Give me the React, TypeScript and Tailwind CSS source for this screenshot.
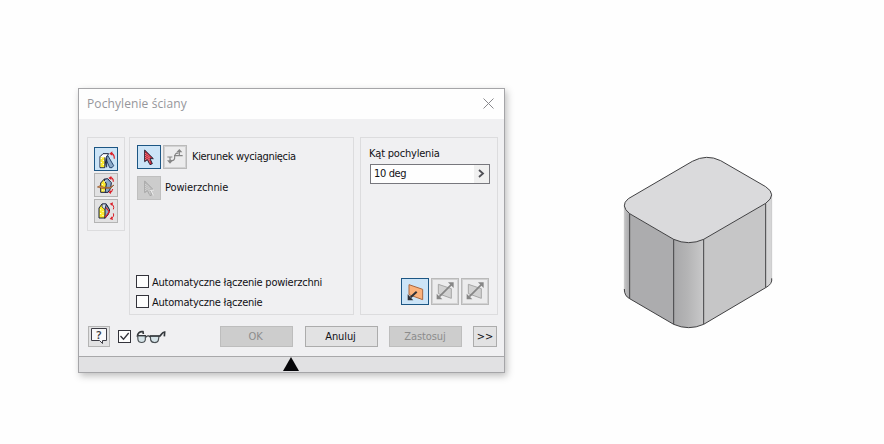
import type { ReactNode } from "react";
import { clsx } from "clsx";

type ToolState = "active" | "idle" | "framed" | "disabled";

const ToolButton = ({ state = "idle", className, children }: { state?: ToolState; className?: string; children: ReactNode }) => (
  <button
    className={clsx(
      "block shrink-0 border",
      state === "active" && "border-[#1c5684] bg-[#cce4f7]",
      state === "idle" && "border-[#b4b4b4] bg-[#e2e2e3]",
      state === "framed" && "border-[#bababa] bg-[#ececed] shadow-[inset_0_0_0_1px_#d2d2d3]",
      state === "disabled" && "border-[#bfbfbf] bg-[#cccccc]",
      className ?? "size-6",
    )}
  >
    {children}
  </button>
);

const Icon = ({ children }: { children: ReactNode }) => (
  <svg viewBox="3 3 66 66" className="size-[22px]" fill="none">
    {children}
  </svg>
);

const FixedEdgeIcon = () => (
  <Icon>
    <path d="M18 29 27 20H44L37 30 32 62H18Z" fill="#fff" stroke="#18203c" strokeWidth="3" />
    <path d="M19.500 31H32V60.500H19.500Z" fill="#fbe92d" />
    <path d="M22 33v3M28 39v3M22 45v3M28 51v3" stroke="#fff" strokeWidth="3" />
    <path d="M32 31V62" stroke="#18203c" strokeWidth="2" />
    <path d="M41 25 59 56 54 62H47L36 36Z" fill="#8ba9c8" stroke="#28466f" strokeWidth="3" />
    <path d="M38 34V61" stroke="#18203c" strokeWidth="3" />
    <path d="M50 19C57 19 61 25 61 35" stroke="#dc2029" strokeWidth="3.500" />
    <path d="m46 20 9-7v13Z" fill="#dc2029" />
  </Icon>
);

const FixedPlaneIcon = () => (
  <Icon>
    <path d="M20 30 30 19H40L36 58H20Z" fill="#fbe92d" stroke="#18203c" strokeWidth="3" />
    <path d="M30 19 41 17 52 29 50 46 42 58H33L37 33Z" fill="#8ba9c8" stroke="#18203c" strokeWidth="3" />
    <path d="M30 28 37 22M25 33v3M25 50v3M31 52v3" stroke="#fff" strokeWidth="3" />
    <path d="m10 42 8-4 12 5h18l12-7-10 10H24Z" fill="#d99c55" stroke="#8b4b25" strokeWidth="2" />
    <path d="M48 14C55 14 58 19 58 26M56 48C55 54 52 57 48 58" stroke="#dc2029" strokeWidth="3.500" />
    <path d="m43 15 9-6v12ZM43 58l8-6v11Z" fill="#dc2029" />
  </Icon>
);

const PartingLineIcon = () => (
  <Icon>
    <path d="M15 27 24 15H37L33 57H15Z" fill="#fbe92d" stroke="#18203c" strokeWidth="3" />
    <path d="M25 15H36L45 28 32 31 24 24Z" fill="#d3dfed" stroke="#18203c" strokeWidth="2" />
    <path d="M37 16 47 33 43 46 33 58V30Z" fill="#8ba9c8" stroke="#18203c" strokeWidth="3" />
    <path d="M20 31v3M27 36v3M20 42v3M27 48v3" stroke="#fff" strokeWidth="3" />
    <path d="m36 26 10 12-12 17" stroke="#dc2029" strokeWidth="3.500" />
    <path d="M51 15C58 17 61 23 58 31M58 43C61 50 57 56 51 59" stroke="#dc2029" strokeWidth="3" />
    <path d="m47 14 10-4-2 11ZM47 60l10 3-3-11Z" fill="#dc2029" />
  </Icon>
);

const PickArrow = ({ muted = false }: { muted?: boolean }) => (
  <Icon>
    <path
      d="M23 15V50L31 44 39 59 46 56 39 41H49Z"
      fill={muted ? "#bcbcbc" : "#cf2435"}
      stroke={muted ? "#989898" : "#252738"}
      strokeWidth={muted ? 2 : 3}
    />
    <path
      d="M26 24v21M30 27v16M34 31v15M38 35v20"
      stroke={muted ? "#e6e6e6" : "#f6c9cd"}
      strokeWidth="2"
      strokeDasharray="3 3"
    />
    {muted && <path d="m39 43 12-1M42 44l7 14" stroke="#eee" strokeWidth="3" />}
  </Icon>
);

const FlipIcon = () => (
  <Icon>
    <path d="M13 36H28M21 36V48M33 32H59M49 18V32M22 45C31 50 36 43 35 36 35 27 39 23 46 25" stroke="#858585" strokeWidth="3.500" />
    <path d="m49 12 9 10H40ZM21 56l-9-10h18Z" fill="#858585" />
  </Icon>
);

const SideIcon = ({ active = false }: { active?: boolean }) => (
  <svg viewBox="3 3 78 75" className="h-[25px] w-[26px]" fill="none">
    <path
      d={active ? "M24 20 65 34V65L24 50Z" : "M22 19 61 32V61L22 47Z"}
      fill={active ? "#fbb27c" : "#d2d2d2"}
      stroke={active ? "#a9663f" : "#a6a6a6"}
      strokeWidth="3"
    />
    {active ? (
      <>
        <path d="M47 41 29 58" stroke="#303137" strokeWidth="6" />
        <path d="M20 67V49L37 67Z" fill="#303137" />
      </>
    ) : (
      <>
        <path d="M25 56 61 20" stroke="#868686" strokeWidth="5" />
        <path d="M17 64V47L34 64ZM68 13V30L51 13Z" fill="#868686" />
      </>
    )}
  </svg>
);

const HelpIcon = () => (
  <svg viewBox="0 0 20 19" className="h-[19px] w-5" fill="none">
    <path d="M2.500 1.500h15v12h-4v3l-3-3h-8Z" fill="#f8f8fa" stroke="#3c3c45" />
    <text x="7.200" y="11.500" fontSize="11" fontWeight="600" fontFamily="Noto Sans, sans-serif" fill="#3c3c45">?</text>
  </svg>
);

const GlassesIcon = () => (
  <svg viewBox="0 0 90 42" className="h-[14px] w-[30px] shrink-0" fill="none">
    <path d="M4 20C4 10 12 3 21 5L22 12M70 20C77 15 78 5 86 6L85 19" stroke="#34383c" strokeWidth="5" />
    <path d="M5 17H28V30C26 40 8 40 6 30ZM43 18H69L67 31C64 40 47 40 44 30Z" fill="#d5e3e8" stroke="#4a5054" strokeWidth="3.500" />
    <path d="M4 17H29M29 22Q36 14 43 21M42 18H71" stroke="#34383c" strokeWidth="4" />
  </svg>
);

const Checkbox = ({ checked = false }: { checked?: boolean }) => (
  <span className="block size-[13px] shrink-0 border border-[#33333b] bg-[#fdfdfd]">
    {checked && (
      <svg viewBox="0 0 11 11" className="size-[11px]" fill="none">
        <path d="m1.500 5 3 3.200L9.700 2" stroke="#33333b" strokeWidth="1.300" />
      </svg>
    )}
  </span>
);

const PushButton = ({ disabled = false, className, children }: { disabled?: boolean; className: string; children: ReactNode }) => (
  <button
    className={clsx(
      "h-[21px] shrink-0 border text-center leading-[20px] tracking-[-0.1px]",
      disabled ? "border-[#bdbdbd] bg-[#cdcdcd] text-[#8c8c8c]" : "border-[#acacac] bg-[#e2e2e3] text-[#111115]",
      className,
    )}
  >
    {children}
  </button>
);

const DraftDialog = () => (
  <div className="mt-[88px] ml-[78px] flex h-[285px] w-[427px] shrink-0 flex-col border border-[#a5a5a8] bg-[#f0f0f2] shadow-[2px_3px_7px_rgba(0,0,0,0.25)]">
    <div className="flex h-[30px] shrink-0 items-center justify-between bg-[#fefefe] pr-[10px] pl-2 font-['Open_Sans',sans-serif] text-[12px] text-[#96969b]">
      <span className="tracking-[0.1px]">Pochylenie ściany</span>
      <svg viewBox="0 0 11 11" className="mb-[2px] size-[11px]" fill="none">
        <path d="m.5.5 10 10M10.500.5l-10 10" stroke="#88888c" />
      </svg>
    </div>

    <div className="flex shrink-0 items-start pt-[18px] pl-2">
      <div className="flex h-[94px] w-[38px] flex-col items-center gap-[2px] border border-[#dcdcde] pt-[9px]">
        <ToolButton state="active"><FixedEdgeIcon /></ToolButton>
        <ToolButton><FixedPlaneIcon /></ToolButton>
        <ToolButton><PartingLineIcon /></ToolButton>
      </div>

      <div className="ml-1 flex h-[178px] w-[225px] flex-col border border-[#dcdcde] pt-[7px] pl-[7px]">
        <div className="flex items-center">
          <ToolButton state="active"><PickArrow /></ToolButton>
          <ToolButton state="framed" className="ml-[2px] size-6"><FlipIcon /></ToolButton>
          <span className="ml-[5px] tracking-[-0.33px]">Kierunek wyciągnięcia</span>
        </div>
        <div className="mt-[7px] flex items-center">
          <ToolButton state="disabled"><PickArrow muted /></ToolButton>
          <span className="ml-1 tracking-[-0.12px]">Powierzchnie</span>
        </div>
        <div className="mt-[75px] -ml-px flex h-[13px] items-center gap-[3px]">
          <Checkbox />
          <span className="pt-[3px] tracking-[-0.23px]">Automatyczne łączenie powierzchni</span>
        </div>
        <div className="mt-[7px] -ml-px flex h-[13px] items-center gap-[3px]">
          <Checkbox />
          <span className="pt-[3px] tracking-[-0.23px]">Automatyczne łączenie</span>
        </div>
      </div>

      <div className="ml-[6px] flex h-[178px] w-[138px] flex-col border border-[#dcdcde] pt-2 pl-[9px]">
        <span className="-ml-px h-[18px] leading-4 tracking-[-0.2px]">Kąt pochylenia</span>
        <div className="flex h-5 w-[120px] items-center justify-between border border-[#77777d] bg-[#fefefe] pl-[3px]">
          <span className="tracking-[-0.35px]">10 deg</span>
          <span className="flex h-full w-[15px] items-center justify-center bg-[#f0f0f0]">
            <svg viewBox="0 0 7 9" className="mb-px h-[9px] w-[7px]" fill="none">
              <path d="m1 1 4 3.500L1 8" stroke="#505056" strokeWidth="1.800" />
            </svg>
          </span>
        </div>
        <div className="mt-[94px] ml-[31px] flex gap-[2px]">
          <ToolButton state="active" className="h-[27px] w-7"><SideIcon active /></ToolButton>
          <ToolButton state="framed" className="h-[27px] w-7"><SideIcon /></ToolButton>
          <ToolButton state="framed" className="h-[27px] w-7"><SideIcon /></ToolButton>
        </div>
      </div>
    </div>

    <div className="mt-[11px] flex h-[21px] shrink-0 items-center pl-[9px]">
      <ToolButton className="h-[21px] w-[22px]"><HelpIcon /></ToolButton>
      <div className="ml-2 flex items-center gap-[5px]">
        <Checkbox checked />
        <GlassesIcon />
      </div>
      <PushButton disabled className="ml-[54px] w-[73px] pr-[2px]">OK</PushButton>
      <PushButton className="ml-3 w-[73px] pr-[2px]">Anuluj</PushButton>
      <PushButton disabled className="ml-[11px] w-[73px] pr-px">Zastosuj</PushButton>
      <PushButton className="ml-[11px] w-6">&gt;&gt;</PushButton>
    </div>

    <div className="mt-auto h-4 shrink-0 border-t border-[#a8a8aa] bg-[#e1e1e3] pl-[204px]">
      <svg viewBox="0 0 16 14" className="h-[14px] w-4">
        <path d="M8 0 16 14H0Z" fill="#060609" />
      </svg>
    </div>
  </div>
);

const RoundedBlock = () => (
  <svg viewBox="0 0 525 570" className="mt-[145px] ml-[105px] h-[190px] w-[175px] shrink-0" fill="none">
    <defs>
      <linearGradient id="front-corner">
        <stop offset="0" stopColor="#a8a8aa" />
        <stop offset=".45" stopColor="#b4b4b5" />
        <stop offset=".85" stopColor="#c3c3c4" />
        <stop offset="1" stopColor="#cacacb" />
      </linearGradient>
      <linearGradient id="left-corner">
        <stop offset="0" stopColor="#c4c4c5" />
        <stop offset="1" stopColor="#a7a7a9" />
      </linearGradient>
    </defs>
    <path d="M43 182V440Q46 454 59 461V206Z" fill="url(#left-corner)" />
    <path d="M59 206 191 283V538L59 461Z" fill="#acacae" />
    <path d="M191 283H281V538Q236 558 191 538Z" fill="url(#front-corner)" />
    <path d="M281 283 467 175V428L281 538Z" fill="#c6c6c7" />
    <path d="M467 175 485 150V406Q482 420 467 428Z" fill="#d5d5d6" />
    <path d="M43 182V440M485 150V406" stroke="#bcbcbe" strokeWidth="2" />
    <path
      d="M55 161 247 49Q290 26 332 47L467 125Q503 149 467 175L281 283Q236 303 191 283L59 206Q29 182 55 161Z"
      fill="#dadadc"
      stroke="#414143"
      strokeWidth="3"
    />
    <path d="M43 432Q43 453 59 461L191 538Q236 558 281 538L467 428Q488 417 485 400M59 206V461M191 283V538M281 283V538M467 175V428" stroke="#414143" strokeWidth="3" />
  </svg>
);

const App = () => (
  <main className="flex h-[444px] w-[884px] items-start overflow-hidden bg-[#fefefe] font-['DejaVu_Sans_Condensed','Noto_Sans',sans-serif] text-[11px] whitespace-nowrap text-[#111115]">
    <DraftDialog />
    <RoundedBlock />
  </main>
);

export default App;
